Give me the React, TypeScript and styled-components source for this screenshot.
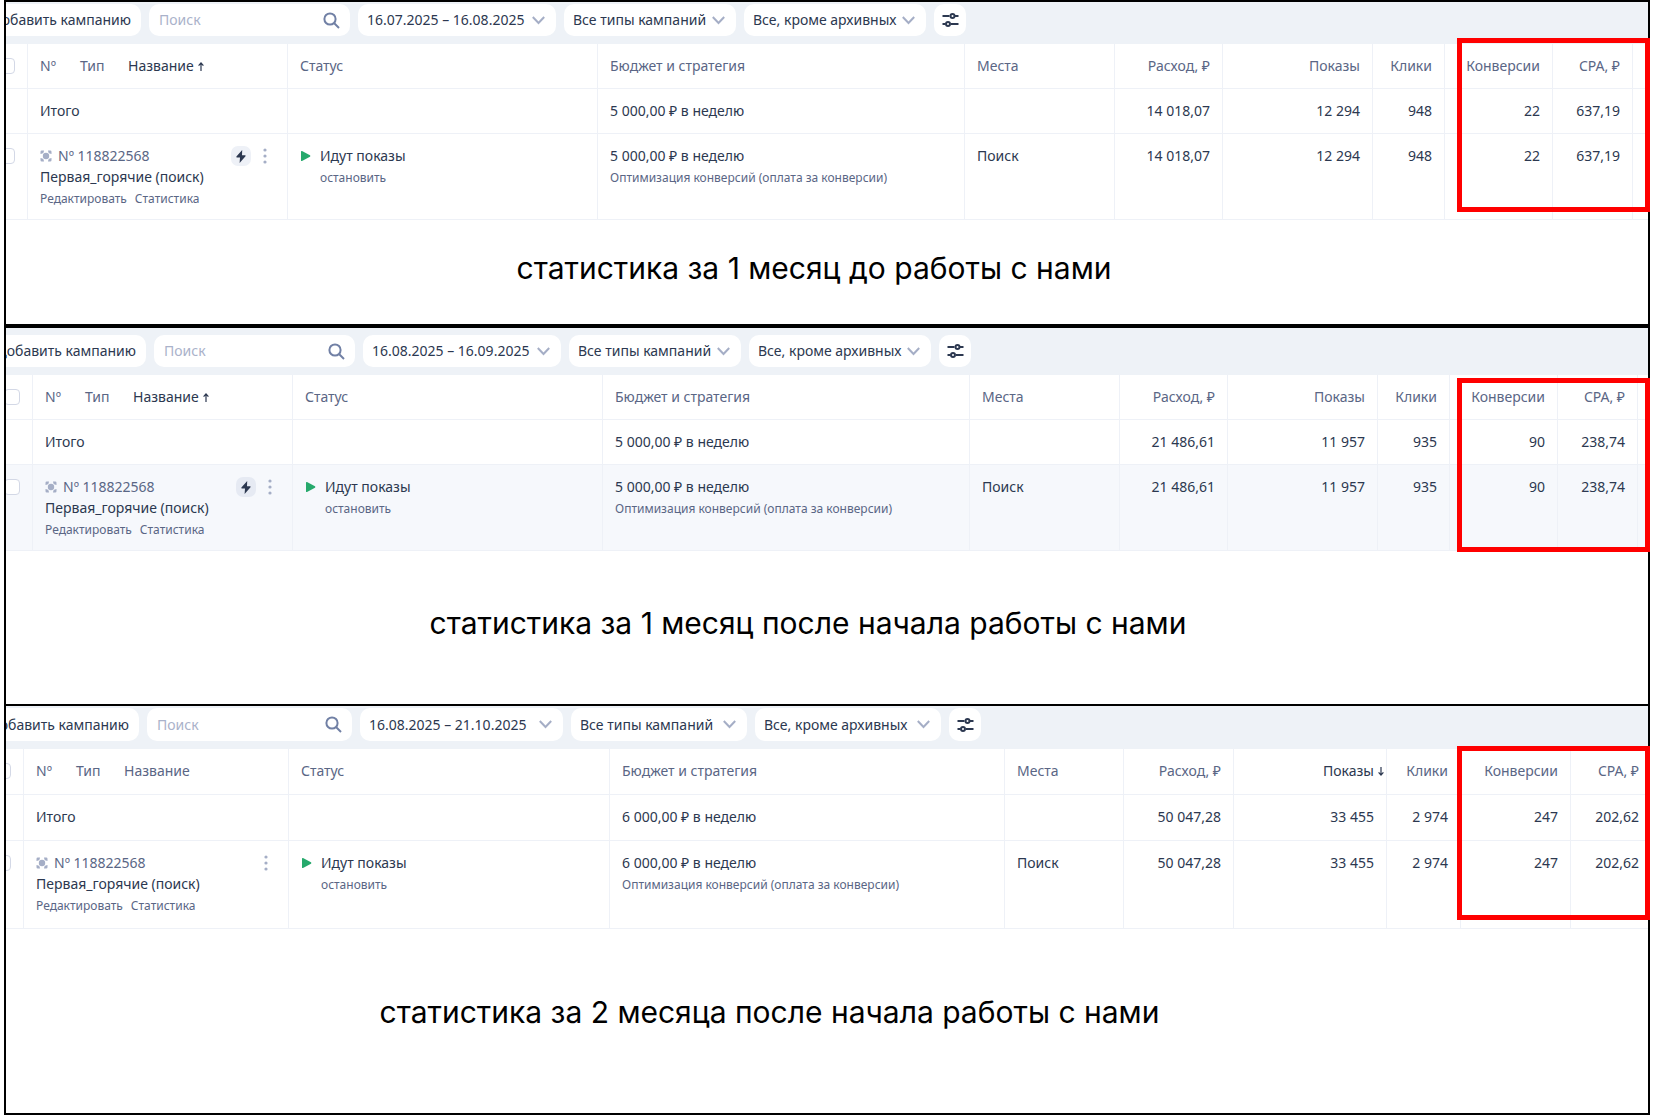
import React from "react";
import styled, { createGlobalStyle, css } from "styled-components";

const GlobalStyle = createGlobalStyle`
  *, *::before, *::after { box-sizing: border-box; }
  body { margin: 0; background: #fff; }
`;

const ink = "#2c3850";
const muted = "#5a6685";
const faint = "#a5aec6";
const line = "#eef1f7";
const uiFont = `"Noto Sans", "Open Sans", sans-serif`;

const Page = styled.main`
  display: flex;
  min-height: 100vh;
  padding: 0 4px;
  font-family: ${uiFont};
  font-size: 14px;
  line-height: 20px;
  color: ${ink};
`;

const Board = styled.div`
  display: flex;
  flex-direction: column;
  flex: 1;
  min-width: 0;
  border: 2px solid #000;
`;

const Panel = styled.section<{ $divider: number; $last?: boolean }>`
  position: relative;
  border-top: ${(p) => p.$divider}px solid #000;
  ${(p) => p.$last && css`flex: 1;`}
`;

const Toolbar = styled.div<{ $top: number; $bottom: number; $height: number }>`
  display: flex;
  gap: 8px;
  overflow: hidden;
  padding: ${(p) => p.$top}px 0 ${(p) => p.$bottom}px;
  background: #eef2f7;

  > * { height: ${(p) => p.$height}px; }
`;

const pill = css`
  flex: none;
  border: 0;
  border-radius: 10px;
  background: #fff;
  color: ${ink};
  font: 14px/20px ${uiFont};
`;

const AddButton = styled.button<{ $width: number }>`
  ${pill}
  display: flex;
  align-items: center;
  justify-content: flex-end;
  overflow: hidden;
  width: ${(p) => p.$width}px;
  padding: 0 10px 0 0;
  border-radius: 0 10px 10px 0;
  white-space: nowrap;
`;

const SearchBox = styled.label<{ $width: number }>`
  ${pill}
  display: flex;
  align-items: center;
  width: ${(p) => p.$width}px;
  padding: 0 10px;
`;

const SearchInput = styled.input`
  flex: 1;
  min-width: 0;
  padding: 0;
  border: 0;
  outline: 0;
  background: none;
  color: ${ink};
  font: inherit;

  &::placeholder { color: #aab2ca; opacity: 1; }
`;

const DateButton = styled.button<{ $width: number }>`
  ${pill}
  display: flex;
  align-items: center;
  justify-content: space-between;
  width: ${(p) => p.$width}px;
  padding: 0 11px 0 9px;
  white-space: nowrap;
`;

const SelectBox = styled.div<{ $width: number }>`
  ${pill}
  display: grid;
  align-items: center;
  width: ${(p) => p.$width}px;

  > * { grid-area: 1 / 1; }
  > svg { justify-self: end; margin-right: 11px; pointer-events: none; }
`;

const Select = styled.select`
  width: 100%;
  height: 100%;
  padding: 0 28px 0 9px;
  border: 0;
  appearance: none;
  background: none;
  color: inherit;
  font: inherit;
`;

const FilterButton = styled.button`
  ${pill}
  display: flex;
  align-items: center;
  justify-content: center;
  width: 32px;
  padding: 0;
`;

const TableClip = styled.div`
  overflow: hidden;
`;

const Table = styled.table<{ $bleed: number }>`
  width: calc(100% + ${(p) => p.$bleed}px);
  table-layout: fixed;
  border-collapse: separate;
  border-spacing: 0;
`;

const Col = styled.col<{ $width?: number }>`
  width: ${(p) => (p.$width ? `${p.$width}px` : "auto")};
`;

const Row = styled.tr<{ $height: number; $active?: boolean }>`
  height: ${(p) => p.$height}px;
  background: ${(p) => (p.$active ? "#f6f8fc" : "#fff")};
`;

const cell = css<{ $end?: boolean; $bare?: boolean; $check?: boolean }>`
  padding: 12px 12px 8px ${(p) => (p.$check || p.$bare ? 0 : 12)}px;
  border-bottom: 1px solid ${line};
  border-right: ${(p) => (p.$bare ? "0" : `1px solid ${line}`)};
  text-align: ${(p) => (p.$end ? "right" : "left")};
  vertical-align: top;
  white-space: nowrap;
`;

const Head = styled.th<{ $end?: boolean; $bare?: boolean; $check?: boolean }>`
  ${cell}
  color: ${muted};
  font-weight: 400;
`;

const Cell = styled.td<{ $end?: boolean; $bare?: boolean; $check?: boolean }>`
  ${cell}
`;

const CheckSlot = styled.div`
  display: flex;
  align-items: center;
  justify-content: flex-end;
  height: 20px;
`;

const Checkbox = styled.input`
  flex: none;
  width: 16px;
  height: 16px;
  margin: 0;
  border: 1px solid #d3d8e6;
  border-radius: 4px;
  appearance: none;
  background: #fff;
`;

const NameHead = styled.div`
  display: flex;
`;

const NameHeadItem = styled.span<{ $width?: number }>`
  ${(p) => p.$width && css`width: ${p.$width}px;`}
`;

const Sorted = styled.span<{ $hang?: boolean }>`
  display: inline-flex;
  align-items: center;
  gap: 4px;
  color: ${ink};
  ${(p) => p.$hang && css`margin-right: -10px;`}
`;

const CampaignTop = styled.div`
  display: flex;
  align-items: center;
  height: 20px;
  color: ${muted};
`;

const CampaignId = styled.span`
  flex: 1;
  padding-left: 6px;
`;

const IconButton = styled.button<{ $fill?: string; $width: number }>`
  display: flex;
  align-items: center;
  justify-content: center;
  width: ${(p) => p.$width}px;
  height: 20px;
  padding: 0;
  border: 0;
  border-radius: 7px;
  background: ${(p) => p.$fill ?? "none"};
`;

const MenuButton = styled(IconButton)`
  margin-left: 4px;
`;

const TextLine = styled.div`
  line-height: 22px;
`;

const SmallLine = styled.div<{ $tall?: boolean }>`
  display: flex;
  gap: 8px;
  color: ${muted};
  font-size: 12px;
  line-height: ${(p) => (p.$tall ? 24 : 22)}px;
`;

const Link = styled.a`
  color: inherit;
  text-decoration: none;
`;

const Status = styled.div`
  display: grid;
  grid-template-columns: 20px 1fr;

  > svg { align-self: center; }
  > div { grid-column: 2; }
`;

const Caption = styled.h2<{ $top: number; $bottom: number; $shift: number }>`
  margin: 0;
  padding: ${(p) => p.$top}px ${(p) => p.$shift}px ${(p) => p.$bottom}px 0;
  color: #000;
  font: 400 30px/36px Inter, sans-serif;
  text-align: center;
`;

const Highlight = styled.div<{ $top: number }>`
  position: absolute;
  top: ${(p) => p.$top}px;
  right: -2px;
  width: 193px;
  height: 174px;
  border: 5px solid #f00;
  pointer-events: none;
`;

const SearchIcon = () => (
  <svg width="17" height="17" viewBox="0 0 17 17" fill="none" stroke="#7180a5" strokeWidth="2">
    <circle cx="7" cy="7" r="5.6" />
    <path d="M11 11l5 5" />
  </svg>
);

const Chevron = () => (
  <svg width="13" height="9" viewBox="0 0 13 9" fill="none" stroke={faint} strokeWidth="2">
    <path d="M.8 1l5.7 6L12.200 1" />
  </svg>
);

const SlidersIcon = () => (
  <svg width="17" height="16" viewBox="0 0 17 16" fill="none" stroke={ink} strokeWidth="2">
    <path d="M.5 4h7M13 4h3.500M.5 12h3M9 12h7.500" />
    <circle cx="10.500" cy="4" r="2" />
    <circle cx="6" cy="12" r="2" />
  </svg>
);

const SortArrow = ({ down }: { down?: boolean }) => (
  <svg width="6" height="9" viewBox="0 0 6 9" fill="none" stroke={ink} strokeWidth="1.200">
    <path d={down ? "M3 0v8M.6 5.400L3 8l2.400-2.600" : "M3 9V1M.6 3.600L3 1l2.400 2.600"} />
  </svg>
);

const TargetIcon = () => (
  <svg width="12" height="12" viewBox="0 0 12 12" fill={faint}>
    <circle cx="6" cy="6" r="3.200" />
    <path d="M.5 1.800Q.5.500 1.800.500H4L3.600 2.400 2.400 3.600.5 4zM8 .5h2.200Q11.500.5 11.500 1.800V4L9.600 3.600 8.400 2.400zM11.500 8v2.200Q11.500 11.500 10.200 11.500H8L8.400 9.600 9.600 8.400zM4 11.500H1.800Q.5 11.500.5 10.200V8L2.400 8.400 3.600 9.600z" />
  </svg>
);

const BoltIcon = () => (
  <svg width="10" height="13" viewBox="0 0 10 13" fill={ink}>
    <path d="M6.200 0L.4 6.600Q.1 7.400.9 7.600H4L3.600 13 9.500 6.300Q9.900 5.500 9.100 5.300H6z" />
  </svg>
);

const DotsIcon = () => (
  <svg width="4" height="16" viewBox="0 0 4 16" fill={faint}>
    <circle cx="2" cy="2" r="1.600" />
    <circle cx="2" cy="8" r="1.600" />
    <circle cx="2" cy="14" r="1.600" />
  </svg>
);

const PlayIcon = () => (
  <svg width="11" height="12" viewBox="0 0 11 12" fill="#26a96c">
    <path d="M1 1.600Q1 .6 2 1L10 5.300Q10.800 6 10 6.700L2 11Q1 11.400 1 10.400z" />
  </svg>
);

interface Report {
  id: string;
  period: string;
  budget: string;
  cost: string;
  shows: string;
  clicks: string;
  conversions: string;
  cpa: string;
  sort: "name" | "shows";
  boost: boolean;
  active?: boolean;
  caption: string;
  look: {
    divider: number;
    bar: [number, number, number];
    pills: [number, number, number, number, number];
    cols: (number | undefined)[];
    bleed: number;
    rows: [number, number];
    caption: [number, number, number];
    highlight: number;
  };
}

const reports: Report[] = [
  {
    id: "before",
    period: "16.07.2025 – 16.08.2025",
    budget: "5\u00a0000,00 ₽ в неделю",
    cost: "14\u00a0018,07",
    shows: "12\u00a0294",
    clicks: "948",
    conversions: "22",
    cpa: "637,19",
    sort: "name",
    boost: true,
    caption: "статистика за 1 месяц до работы с нами",
    look: {
      divider: 0,
      bar: [2, 8, 32],
      pills: [135, 201, 198, 172, 182],
      cols: [22, 260, 310, undefined, 150, 108, 150, 72, 108, 80, 15],
      bleed: 0,
      rows: [45, 86],
      caption: [30, 38, 26],
      highlight: 36,
    },
  },
  {
    id: "month-1",
    period: "16.08.2025 – 16.09.2025",
    budget: "5\u00a0000,00 ₽ в неделю",
    cost: "21\u00a0486,61",
    shows: "11\u00a0957",
    clicks: "935",
    conversions: "90",
    cpa: "238,74",
    sort: "name",
    boost: true,
    active: true,
    caption: "статистика за 1 месяц после начала работы с нами",
    look: {
      divider: 4,
      bar: [7, 8, 32],
      pills: [140, 201, 198, 172, 182],
      cols: [27, 260, 310, undefined, 150, 108, 150, 72, 108, 80, 10],
      bleed: 0,
      rows: [45, 86],
      caption: [54, 63, 38],
      highlight: 50,
    },
  },
  {
    id: "month-2",
    period: "16.08.2025 – 21.10.2025",
    budget: "6\u00a0000,00 ₽ в неделю",
    cost: "50\u00a0047,28",
    shows: "33\u00a0455",
    clicks: "2\u00a0974",
    conversions: "247",
    cpa: "202,62",
    sort: "shows",
    boost: false,
    caption: "статистика за 2 месяца после начала работы с нами",
    look: {
      divider: 2,
      bar: [2, 8, 33],
      pills: [133, 205, 203, 176, 186],
      cols: [18, 265, 321, undefined, 119, 110, 153, 74, 110, 81],
      bleed: 4,
      rows: [46, 88],
      caption: [65, 0, 115],
      highlight: 40,
    },
  },
];

const CampaignReport = ({ report, last }: { report: Report; last: boolean }) => {
  const { look } = report;
  const spare = look.cols.length > 10;
  const totals = [report.cost, report.shows, report.clicks, report.conversions, report.cpa];

  return (
    <Panel $divider={look.divider} $last={last}>
      <Toolbar $top={look.bar[0]} $bottom={look.bar[1]} $height={look.bar[2]}>
        <AddButton type="button" $width={look.pills[0]}>
          <span>Добавить кампанию</span>
        </AddButton>
        <SearchBox $width={look.pills[1]} htmlFor={`search-${report.id}`}>
          <SearchInput id={`search-${report.id}`} type="text" placeholder="Поиск" aria-label="Поиск" />
          <SearchIcon />
        </SearchBox>
        <DateButton type="button" $width={look.pills[2]}>
          <span>{report.period}</span>
          <Chevron />
        </DateButton>
        <SelectBox $width={look.pills[3]}>
          <Select aria-label="Тип кампаний">
            <option>Все типы кампаний</option>
          </Select>
          <Chevron />
        </SelectBox>
        <SelectBox $width={look.pills[4]}>
          <Select aria-label="Статус кампаний">
            <option>Все, кроме архивных</option>
          </Select>
          <Chevron />
        </SelectBox>
        <FilterButton type="button" aria-label="Фильтры">
          <SlidersIcon />
        </FilterButton>
      </Toolbar>

      <TableClip>
        <Table $bleed={look.bleed}>
          <colgroup>
            {look.cols.map((width, i) => (
              <Col key={i} $width={width} />
            ))}
          </colgroup>
          <thead>
            <Row $height={look.rows[0]}>
              <Head $check>
                <CheckSlot>
                  <Checkbox type="checkbox" aria-label="Выбрать все" />
                </CheckSlot>
              </Head>
              <Head>
                <NameHead>
                  <NameHeadItem $width={40}>Nº</NameHeadItem>
                  <NameHeadItem $width={48}>Тип</NameHeadItem>
                  {report.sort === "name" ? (
                    <Sorted>
                      Название <SortArrow />
                    </Sorted>
                  ) : (
                    <NameHeadItem>Название</NameHeadItem>
                  )}
                </NameHead>
              </Head>
              <Head>Статус</Head>
              <Head>Бюджет и стратегия</Head>
              <Head>Места</Head>
              <Head $end>Расход, ₽</Head>
              <Head $end>
                {report.sort === "shows" ? (
                  <Sorted $hang>
                    Показы <SortArrow down />
                  </Sorted>
                ) : (
                  "Показы"
                )}
              </Head>
              <Head $end>Клики</Head>
              <Head $end>Конверсии</Head>
              <Head $end>CPA, ₽</Head>
              {spare && <Head $bare />}
            </Row>
          </thead>
          <tbody>
            <Row $height={look.rows[0]}>
              <Cell $check />
              <Cell>Итого</Cell>
              <Cell />
              <Cell>{report.budget}</Cell>
              <Cell />
              {totals.map((value, i) => (
                <Cell key={i} $end>
                  {value}
                </Cell>
              ))}
              {spare && <Cell $bare />}
            </Row>
            <Row $height={look.rows[1]} $active={report.active}>
              <Cell $check>
                <CheckSlot>
                  <Checkbox type="checkbox" aria-label="Выбрать кампанию" />
                </CheckSlot>
              </Cell>
              <Cell>
                <CampaignTop>
                  <TargetIcon />
                  <CampaignId>Nº 118822568</CampaignId>
                  {report.boost && (
                    <IconButton
                      type="button"
                      aria-label="Быстрые действия"
                      $width={20}
                      $fill={report.active ? "#e6eaf3" : "#eef1f7"}
                    >
                      <BoltIcon />
                    </IconButton>
                  )}
                  <MenuButton type="button" aria-label="Меню" $width={20}>
                    <DotsIcon />
                  </MenuButton>
                </CampaignTop>
                <TextLine>Первая_горячие (поиск)</TextLine>
                <SmallLine>
                  <Link href="#edit">Редактировать</Link>
                  <Link href="#stats">Статистика</Link>
                </SmallLine>
              </Cell>
              <Cell>
                <Status>
                  <PlayIcon />
                  <span>Идут показы</span>
                  <SmallLine $tall>
                    <Link href="#stop">остановить</Link>
                  </SmallLine>
                </Status>
              </Cell>
              <Cell>
                {report.budget}
                <SmallLine $tall>Оптимизация конверсий (оплата за конверсии)</SmallLine>
              </Cell>
              <Cell>Поиск</Cell>
              {totals.map((value, i) => (
                <Cell key={i} $end>
                  {value}
                </Cell>
              ))}
              {spare && <Cell $bare />}
            </Row>
          </tbody>
        </Table>
      </TableClip>

      <Caption $top={look.caption[0]} $bottom={look.caption[1]} $shift={look.caption[2]}>
        {report.caption}
      </Caption>
      <Highlight $top={look.highlight} />
    </Panel>
  );
};

export default function App() {
  return (
    <>
      <GlobalStyle />
      <Page>
        <Board>
          {reports.map((report, i) => (
            <CampaignReport key={report.id} report={report} last={i === reports.length - 1} />
          ))}
        </Board>
      </Page>
    </>
  );
}
